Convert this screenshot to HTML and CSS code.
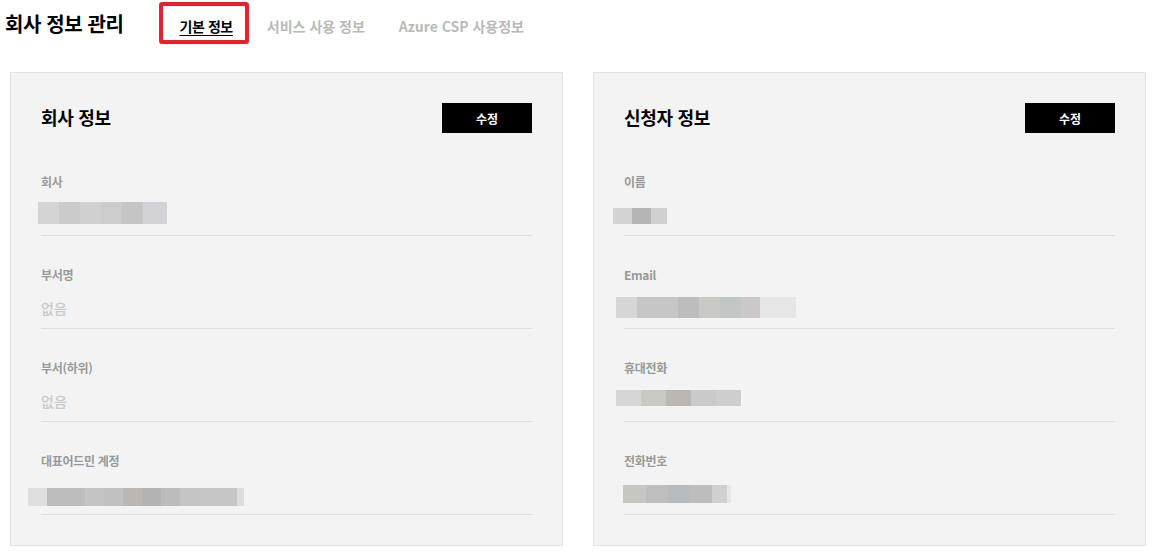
FILE: index.html
```html
<!DOCTYPE html>
<html lang="ko">
<head>
<meta charset="utf-8">
<title>회사 정보 관리</title>
<link rel="stylesheet" href="styles.css">
</head>
<body>
<header class="topbar">
  <h1 class="page-title">회사 정보 관리</h1>
  <nav class="tabs">
    <a class="tab tab-active">기본 정보<span class="tab-mark"></span></a>
    <a class="tab">서비스 사용 정보</a>
    <a class="tab">Azure CSP 사용정보</a>
  </nav>
</header>
<main class="cards">
  <section class="card">
    <div class="card-head">
      <h2 class="card-title">회사 정보</h2>
      <button class="btn-edit">수정</button>
    </div>
    <div class="field">
      <div class="field-label">회사</div>
      <div class="field-value"><span class="redact r-company"></span></div>
    </div>
    <div class="field">
      <div class="field-label">부서명</div>
      <div class="field-value empty">없음</div>
    </div>
    <div class="field">
      <div class="field-label">부서(하위)</div>
      <div class="field-value empty">없음</div>
    </div>
    <div class="field">
      <div class="field-label">대표어드민 계정</div>
      <div class="field-value"><span class="redact r-admin"></span></div>
    </div>
  </section>
  <section class="card">
    <div class="card-head">
      <h2 class="card-title">신청자 정보</h2>
      <button class="btn-edit">수정</button>
    </div>
    <div class="field">
      <div class="field-label">이름</div>
      <div class="field-value"><span class="redact r-name"></span></div>
    </div>
    <div class="field">
      <div class="field-label">Email</div>
      <div class="field-value"><span class="redact r-email"></span></div>
    </div>
    <div class="field">
      <div class="field-label">휴대전화</div>
      <div class="field-value"><span class="redact r-mobile"></span></div>
    </div>
    <div class="field">
      <div class="field-label">전화번호</div>
      <div class="field-value"><span class="redact r-phone"></span></div>
    </div>
  </section>
</main>
</body>
</html>
```

FILE: styles.css
```css
* { box-sizing: border-box; }
html, body { margin: 0; padding: 0; background: #fff; }
body {
  font-family: "Noto Sans CJK KR", "Noto Sans", sans-serif;
  color: #000;
}

.topbar {
  display: flex;
  align-items: center;
  height: 48px;
  padding-left: 5px;
}
.page-title {
  margin: 0;
  font-size: 20px;
  font-weight: 700;
  letter-spacing: -0.4px;
  line-height: 1;
}
.tabs {
  display: flex;
  align-items: center;
  gap: 34px;
  margin-left: 56px;
  padding-top: 4px;
}
.tab {
  position: relative;
  font-size: 14px;
  font-weight: 700;
  color: #b9b9b9;
  letter-spacing: 0;
  line-height: 20px;
}
.tab-active {
  color: #000;
  letter-spacing: -0.4px;
  text-decoration: underline;
  text-underline-offset: 3px;
}
.tab-mark {
  position: absolute;
  left: -20px;
  right: -16px;
  top: -14px;
  bottom: -8px;
  border: 4px solid #e8202e;
  border-radius: 3px;
}

.cards {
  display: grid;
  grid-template-columns: 553px 553px;
  gap: 30px;
  padding: 24px 10px 0;
}
.card {
  background: #f3f3f3;
  border: 1px solid #e3e3e3;
  padding: 30px 30px 30px;
}
.card-head {
  display: flex;
  align-items: center;
  justify-content: space-between;
  height: 30px;
  margin-bottom: 10px;
}
.card-title {
  margin: 0 0 2px;
  font-size: 18px;
  font-weight: 700;
  letter-spacing: -0.3px;
  line-height: 1;
}
.btn-edit {
  width: 90px;
  height: 30px;
  border: 0;
  background: #000;
  color: #fff;
  font-family: inherit;
  font-size: 12px;
  font-weight: 700;
  padding: 0;
}

.field {
  padding: 30px 0 8px;
  border-bottom: 1px solid #dedede;
}
.field-label {
  font-size: 12px;
  font-weight: 700;
  color: #999;
  line-height: 18px;
  letter-spacing: -0.3px;
}
.field-value {
  margin-top: 12px;
  height: 24px;
  font-size: 14px;
  font-weight: 500;
  line-height: 24px;
  color: #333;
  display: flex;
  align-items: center;
}
.field-value.empty { color: #c9c9c9; }

.redact { display: block; }
.r-company {
  width: 129px;
  height: 22px;
  margin-left: -3px;
  margin-top: -5px;
  background: linear-gradient(90deg,
    #d4d4d4 0 21px, #cbcbcb 21px 42px, #d0d0d0 42px 63px,
    #cccccc 63px 84px, #c5c5c5 84px 105px, #d2d2d4 105px 129px);
}
.r-admin {
  width: 216px;
  height: 18px;
  margin-left: -13px;
  margin-top: 6px;
  background: linear-gradient(90deg,
    #dedede 0 19px, #bdbdbd 19px 57px, #c5c4c4 57px 76px, #c0c1c0 76px 95px,
    #b9b8b7 95px 114px, #b2b3b2 114px 133px, #bcbcbc 133px 152px,
    #c4c5c4 152px 171px, #c6c6c6 171px 209px, #dcdcdc 209px 216px);
}
.r-name {
  width: 54px;
  height: 16px;
  margin-left: -11px;
  margin-top: 2px;
  background: linear-gradient(90deg,
    #d3d3d3 0 19px, #b5b5b5 19px 38px, #d0d0d0 38px 54px);
}
.r-email {
  width: 180px;
  height: 21px;
  margin-left: -8px;
  margin-top: -2px;
  background: linear-gradient(90deg,
    #d6d6d6 0 21px, #c6c6c6 21px 62px, #bdbdbd 62px 83px, #c8c8c6 83px 104px,
    #c4c6c6 104px 125px, #cac8c8 125px 144px, #e6e6e7 144px 180px);
}
.r-mobile {
  width: 125px;
  height: 16px;
  margin-left: -8px;
  margin-top: -6px;
  background: linear-gradient(90deg,
    #d6d6d6 0 25px, #c9c9c7 25px 50px, #b9b8b6 50px 75px,
    #c9cac9 75px 100px, #cecece 100px 125px);
}
.r-phone {
  width: 122px;
  height: 18px;
  margin-left: -1px;
  margin-top: 0;
  background: linear-gradient(90deg,
    #c6c6c5 0 23px, #bebebe 23px 45px, #b9babb 45px 67px,
    #bdbdbd 67px 89px, #cfd0cf 89px 104px, #e4e6e8 104px 108px, transparent 108px);
}
```
